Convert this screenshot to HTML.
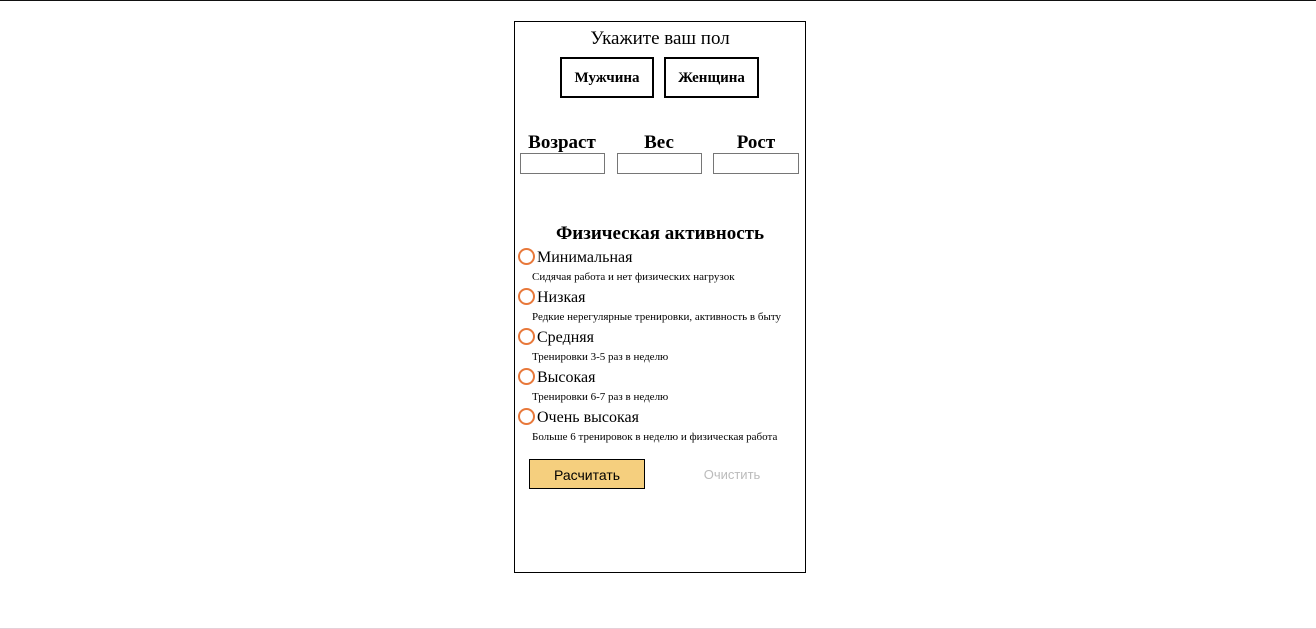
<!DOCTYPE html>
<html><head><meta charset="utf-8"><style>
*{margin:0;padding:0;box-sizing:border-box}
html,body{width:1316px;height:629px;background:#fff;overflow:hidden;position:relative;font-family:"Liberation Serif",serif;color:#000}
.a{position:absolute;white-space:nowrap}
.top{left:0;top:0;width:1316px;height:1px;background:#111}
.bot{left:0;top:628px;width:1316px;height:1px;background:#e6cfd8}
.box{left:514px;top:21px;width:292px;height:552px;border:1px solid #000}
.btn{border:2px solid #000;height:41px;font-weight:bold;font-size:15px;display:flex;align-items:center;justify-content:center;padding-top:2px}
.lbl{font-weight:bold;font-size:19px;text-align:center;width:100px}
.inp{height:21px;border:1px solid #767676;top:153px}
.r{left:518px;width:17px;height:17px;border:2px solid #e8783a;border-radius:50%}
.t{left:537px;font-size:16px;line-height:18px}
.d{left:532px;font-size:11px;line-height:12px}
</style></head><body>
<div class="a top"></div>
<div class="a bot"></div>
<div class="a box"></div>
<div class="a" style="left:514px;width:292px;text-align:center;top:28px;font-size:19px;line-height:22px">Укажите ваш пол</div>
<div class="a btn" style="left:560px;top:57px;width:94px">Мужчина</div>
<div class="a btn" style="left:664px;top:57px;width:95px">Женщина</div>
<div class="a lbl" style="left:512px;top:132px">Возраст</div>
<div class="a lbl" style="left:609px;top:132px">Вес</div>
<div class="a lbl" style="left:706px;top:132px">Рост</div>
<div class="a inp" style="left:520px;width:85px"></div>
<div class="a inp" style="left:617px;width:85px"></div>
<div class="a inp" style="left:713px;width:86px"></div>
<div class="a" style="left:514px;width:292px;text-align:center;top:223px;font-weight:bold;font-size:19px;line-height:22px">Физическая активность</div>

<div class="a r" style="top:248px"></div><div class="a t" style="top:249px">Минимальная</div><div class="a d" style="top:271px">Сидячая работа и нет физических нагрузок</div>
<div class="a r" style="top:288px"></div><div class="a t" style="top:289px">Низкая</div><div class="a d" style="top:311px">Редкие нерегулярные тренировки, активность в быту</div>
<div class="a r" style="top:328px"></div><div class="a t" style="top:329px">Средняя</div><div class="a d" style="top:351px">Тренировки 3-5 раз в неделю</div>
<div class="a r" style="top:368px"></div><div class="a t" style="top:369px">Высокая</div><div class="a d" style="top:391px">Тренировки 6-7 раз в неделю</div>
<div class="a r" style="top:408px"></div><div class="a t" style="top:409px">Очень высокая</div><div class="a d" style="top:431px">Больше 6 тренировок в неделю и физическая работа</div>

<div class="a" style="left:529px;top:459px;width:116px;height:30px;background:#f5cf7e;border:1px solid #000;font-family:'Liberation Sans',sans-serif;font-size:14px;display:flex;align-items:center;justify-content:center;padding-top:1px">Расчитать</div>
<div class="a" style="left:682px;top:467px;width:100px;text-align:center;font-family:'Liberation Sans',sans-serif;font-size:13px;color:#bbb">Очистить</div>
</body></html>
